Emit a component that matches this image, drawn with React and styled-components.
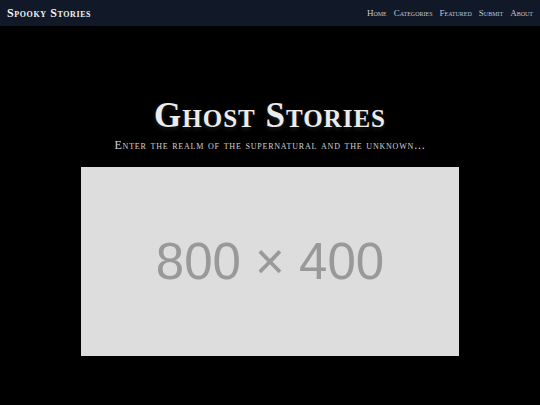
import React from "react";
import styled, { createGlobalStyle } from "styled-components";

const links = ["Home", "Categories", "Featured", "Submit", "About"];

const App = () => (
  <>
    <GlobalStyle />
    <SHeader>
      <SBrand>Spooky Stories</SBrand>
      <SNav>
        {links.map((l) => (
          <SNavLink key={l} href="#">
            {l}
          </SNavLink>
        ))}
      </SNav>
    </SHeader>
    <SHero>
      <STitle>Ghost Stories</STitle>
      <STagline>Enter the realm of the supernatural and the unknown...</STagline>
      <SPlaceholder>800 × 400</SPlaceholder>
    </SHero>
  </>
);

const GlobalStyle = createGlobalStyle`
  body {
    margin: 0;
    background: #000;
    font-family: "Liberation Serif", "DejaVu Serif", serif;
  }
`;

const SHeader = styled.header`
  height: 26px;
  background: #111827;
  display: flex;
  align-items: center;
  justify-content: space-between;
  padding: 0 7px;
`;

const SBrand = styled.div`
  color: #f3f4f6;
  font-weight: bold;
  font-size: 12px;
  font-variant: small-caps;
  letter-spacing: 0.6px;
`;

const SNav = styled.nav`
  display: flex;
  gap: 7px;
`;

const SNavLink = styled.a`
  color: #c4c7cf;
  text-decoration: none;
  font-size: 9px;
  font-variant: small-caps;
`;

const SHero = styled.main`
  display: flex;
  flex-direction: column;
  align-items: center;
  padding-top: 71px;
`;

const STitle = styled.h1`
  margin: 0;
  color: #ececec;
  font-size: 35px;
  font-weight: bold;
  font-variant: small-caps;
  letter-spacing: 1px;
  line-height: 38px;
  text-shadow: 0 2px 4px rgba(255, 255, 255, 0.15);
`;

const STagline = styled.p`
  margin: 3px 0 0;
  color: #d4d4d4;
  font-size: 12px;
  font-variant: small-caps;
  letter-spacing: 0.8px;
  line-height: 14px;
`;

const SPlaceholder = styled.div`
  margin-top: 15px;
  width: 378px;
  height: 189px;
  background: #dddddd;
  color: #999999;
  display: flex;
  align-items: center;
  justify-content: center;
  font-family: "Liberation Sans", Arial, sans-serif;
  font-size: 51px;
`;

export default App;
